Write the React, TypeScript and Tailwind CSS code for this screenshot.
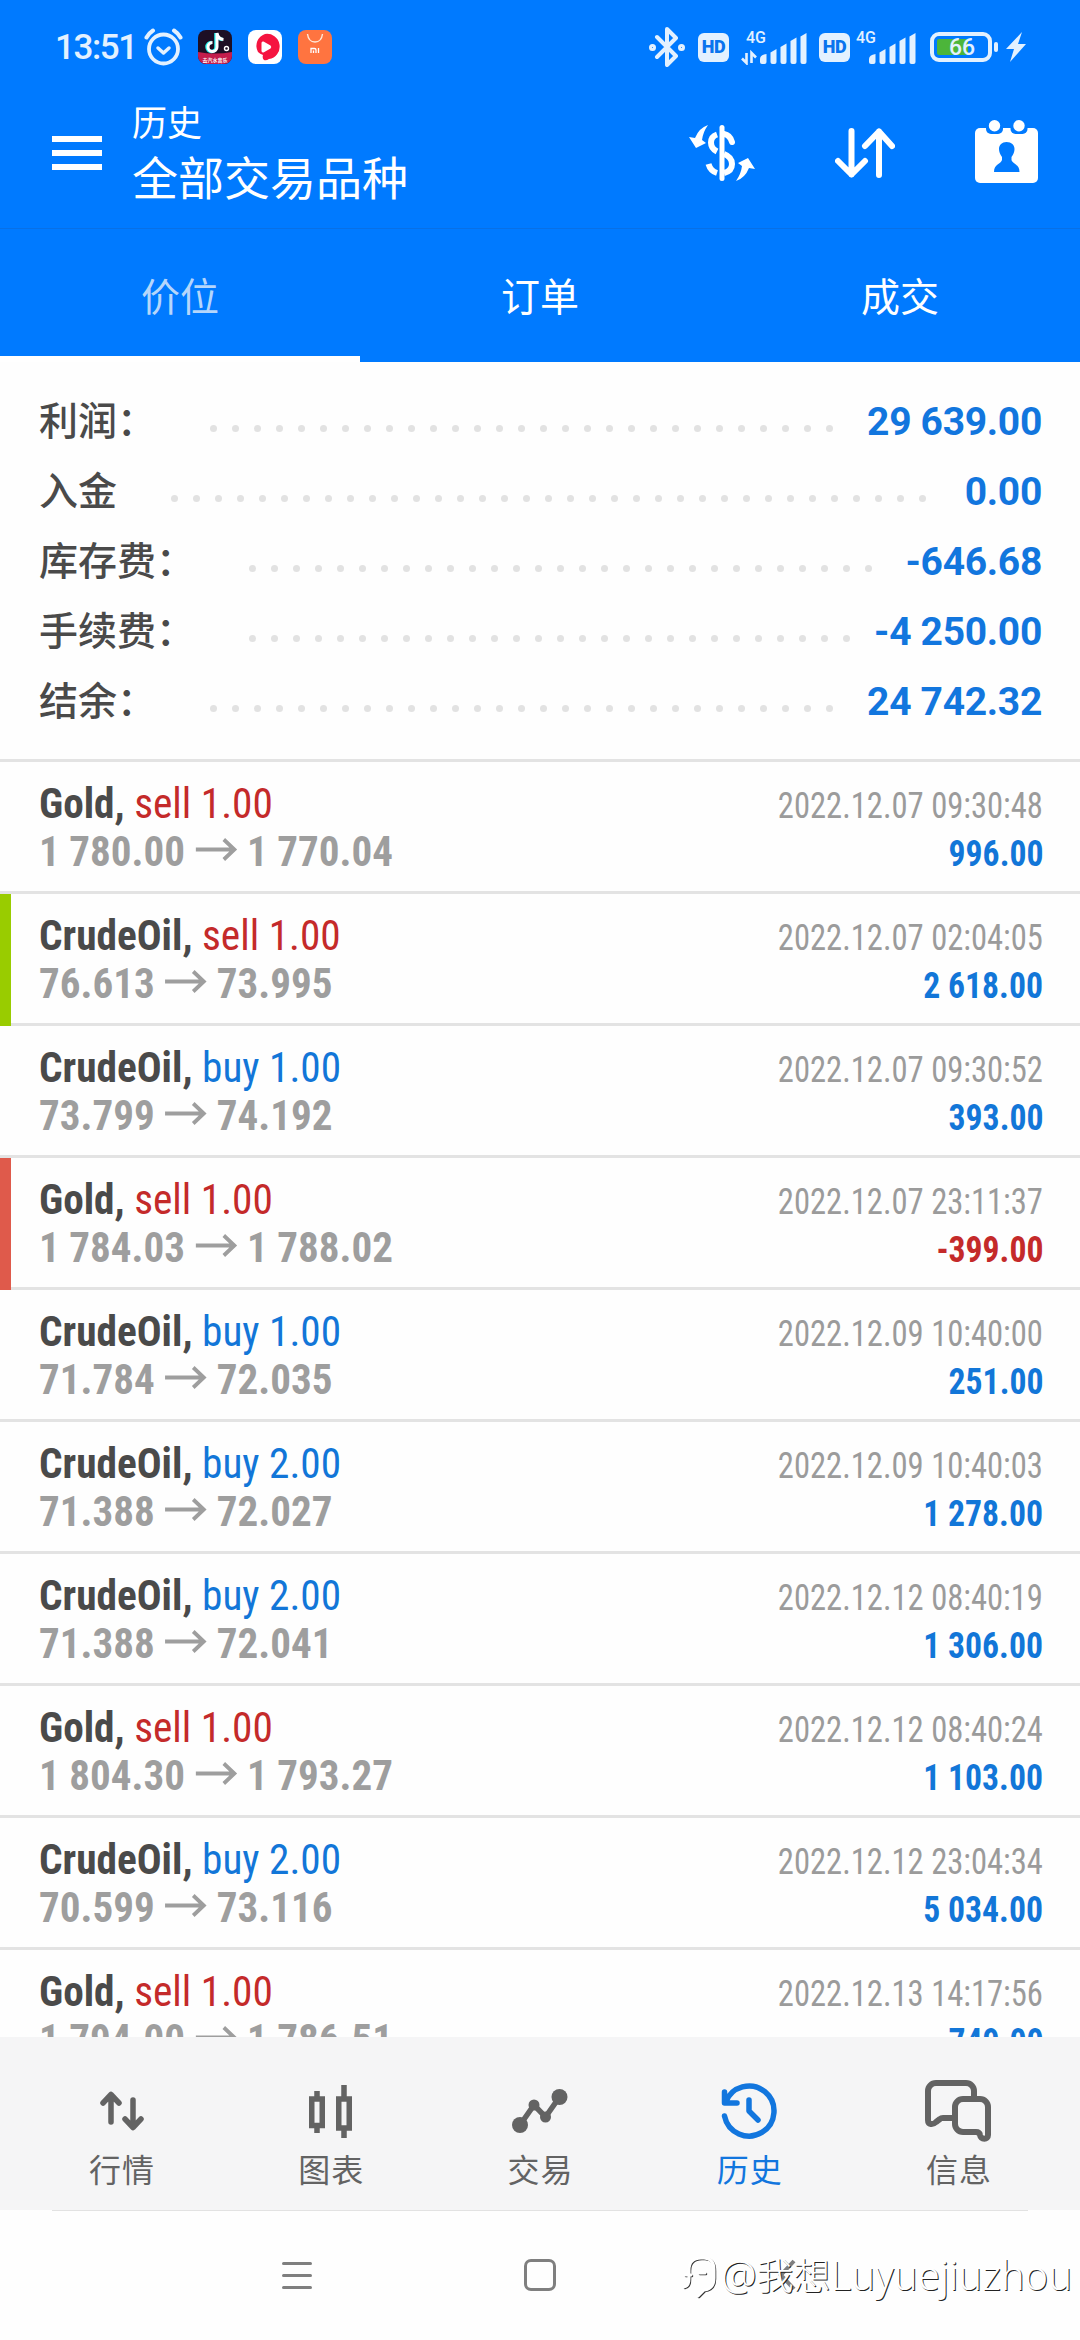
import React from "react";

type Deal = {
  symbol: string;
  side: "buy" | "sell";
  volume: string;
  open: string;
  close: string;
  time: string;
  profit: string;
  mark?: "tp" | "sl";
};

const summary = [
  { label: "利润：", value: "29 639.00" },
  { label: "入金", value: "0.00" },
  { label: "库存费：", value: "-646.68" },
  { label: "手续费：", value: "-4 250.00" },
  { label: "结余：", value: "24 742.32" },
];

const deals: Deal[] = [
  { symbol: "Gold", side: "sell", volume: "1.00", open: "1 780.00", close: "1 770.04", time: "2022.12.07 09:30:48", profit: "996.00" },
  { symbol: "CrudeOil", side: "sell", volume: "1.00", open: "76.613", close: "73.995", time: "2022.12.07 02:04:05", profit: "2 618.00", mark: "tp" },
  { symbol: "CrudeOil", side: "buy", volume: "1.00", open: "73.799", close: "74.192", time: "2022.12.07 09:30:52", profit: "393.00" },
  { symbol: "Gold", side: "sell", volume: "1.00", open: "1 784.03", close: "1 788.02", time: "2022.12.07 23:11:37", profit: "-399.00", mark: "sl" },
  { symbol: "CrudeOil", side: "buy", volume: "1.00", open: "71.784", close: "72.035", time: "2022.12.09 10:40:00", profit: "251.00" },
  { symbol: "CrudeOil", side: "buy", volume: "2.00", open: "71.388", close: "72.027", time: "2022.12.09 10:40:03", profit: "1 278.00" },
  { symbol: "CrudeOil", side: "buy", volume: "2.00", open: "71.388", close: "72.041", time: "2022.12.12 08:40:19", profit: "1 306.00" },
  { symbol: "Gold", side: "sell", volume: "1.00", open: "1 804.30", close: "1 793.27", time: "2022.12.12 08:40:24", profit: "1 103.00" },
  { symbol: "CrudeOil", side: "buy", volume: "2.00", open: "70.599", close: "73.116", time: "2022.12.12 23:04:34", profit: "5 034.00" },
  { symbol: "Gold", side: "sell", volume: "1.00", open: "1 794.00", close: "1 786.51", time: "2022.12.13 14:17:56", profit: "749.00" },
];

const HdBadge = () => (
  <div className="flex h-[29px] w-[31px] items-center justify-center rounded-[6px] bg-[#e3f1ff] text-[18px] font-black leading-none tracking-[-0.5px] text-[#0a74ee]">
    HD
  </div>
);

const SignalBars = ({ x }: { x: number }) => (
  <g fill="#e3f1ff" transform={`translate(${x} 0)`}>
    <path d="M0 33v-3q0-4 6.500-5v8q0 2-2 2H2q-2 0-2-2z" />
    <path d="M10.500 23.500l6-3.500v13q0 2-2 2h-2q-2 0-2-2z" />
    <path d="M20.500 18l6-3.500V33q0 2-2 2h-2q-2 0-2-2z" />
    <path d="M30.500 12l6-3.500V33q0 2-2 2h-2q-2 0-2-2z" />
    <path d="M40.500 7.500l6-3.500v29q0 2-2 2h-2q-2 0-2-2z" />
  </g>
);

const StatusBar = () => (
  <div className="flex h-[78px] items-center pl-[55px] pr-[54px] pt-4 text-[#e3f1ff]">
    <span className="w-[89px] whitespace-nowrap text-[35px] font-medium leading-none tracking-[-1.400px]">13:51</span>

    <svg width="39" height="38" viewBox="0 0 39 38" fill="none" stroke="currentColor" strokeLinecap="round">
      <circle cx="19.500" cy="21" r="14.500" strokeWidth="3.800" />
      <path d="M14 20l5.500 5 5.500-5" strokeWidth="3.500" strokeLinejoin="round" />
      <path d="M2.500 9.500q2-4 6.500-7M36.500 9.500q-2-4-6.500-7" strokeWidth="4" />
    </svg>

    <div className="ml-[15px] flex gap-4">
      <svg width="34" height="34" viewBox="0 0 34 34">
        <defs>
          <clipPath id="music">
            <rect width="34" height="34" rx="8" />
          </clipPath>
        </defs>
        <g clipPath="url(#music)">
          <rect width="34" height="34" fill="#1d0f24" />
          <path d="M0 22q17 3 34 0v12H0z" fill="#c41d4c" />
          <path d="M19 3v14a4.500 4.500 0 1 1-4.500-4.500M19 3q1 6 6.500 6.500" fill="none" stroke="#25f4ee" strokeWidth="3.500" transform="translate(-1 0)" />
          <path d="M19 3v14a4.500 4.500 0 1 1-4.500-4.500M19 3q1 6 6.500 6.500" fill="none" stroke="#fff" strokeWidth="3" />
          <circle cx="28.500" cy="18.500" r="2" fill="none" stroke="#fff" strokeWidth="1.400" />
          <text x="17" y="32" fill="#fff" fontSize="5" fontWeight="700" textAnchor="middle">去汽水音乐</text>
        </g>
      </svg>
      <svg width="34" height="34" viewBox="0 0 34 34">
        <rect width="34" height="34" rx="8" fill="#fff" />
        <path d="M17 4a12.500 12.500 0 1 1 4 25q-3 2-5 1-2-2-1-5-3-1-5-3a12.500 12.500 0 0 1 7-18z" fill="#f5143f" />
        <path d="M13.500 13q0-2 2-1.500l7 4q1.500 1.500 0 3l-7 4q-2 0-2-1.500z" fill="#fff" />
      </svg>
      <svg width="34" height="34" viewBox="0 0 34 34">
        <rect width="34" height="34" rx="8" fill="#ff7440" />
        <path d="M9.500 4q1 8 7.500 8t7.500-8" fill="none" stroke="#ffe9d8" strokeWidth="1.400" />
        <path d="M13 23v-4.500h3.500q1.500 0 1.500 1.500v3M15.500 20.500V23M20.500 18v5" fill="none" stroke="#fff" strokeWidth="1.300" />
      </svg>
    </div>

    <svg className="ml-auto" width="36" height="40" viewBox="0 0 36 40" fill="none" stroke="currentColor" strokeWidth="4" strokeLinejoin="round" strokeLinecap="round">
      <path d="M8 10l19 19-9 9V2l9 9L8 30" />
      <circle cx="3.500" cy="20.500" r="1.500" />
      <circle cx="32.500" cy="20.500" r="1.500" />
    </svg>
    <div className="ml-[13px]">
      <HdBadge />
    </div>
    <svg className="ml-[12px]" width="66" height="36" viewBox="0 0 66 36">
      <text x="5" y="14" fill="#e3f1ff" fontSize="16" fontWeight="500">4G</text>
      <path d="M5.500 24v10L1 29.500M10.500 34V24l4.500 4.500" fill="none" stroke="#e3f1ff" strokeWidth="2.600" />
      <SignalBars x={19} />
    </svg>
    <div className="ml-[12px]">
      <HdBadge />
    </div>
    <svg className="ml-[6px]" width="60" height="36" viewBox="0 0 60 36">
      <text x="0" y="14" fill="#e3f1ff" fontSize="16" fontWeight="500">4G</text>
      <SignalBars x={13} />
    </svg>
    <svg className="ml-[14px]" width="69" height="30" viewBox="0 0 69 30">
      <rect x="2" y="2" width="58" height="26" rx="7" fill="none" stroke="#e3f1ff" strokeWidth="4" />
      <rect x="7" y="7" width="31" height="16" rx="2" fill="#4cb53a" />
      <rect x="64" y="10" width="4" height="10" rx="2" fill="#e3f1ff" />
      <text x="32" y="23" fill="#e3f1ff" fontSize="23" fontWeight="500" textAnchor="middle">66</text>
    </svg>
    <svg className="ml-[7px]" width="20" height="30" viewBox="0 0 20 30" fill="currentColor">
      <path d="M16 0L0 17h8L4 30 20 12h-8z" />
    </svg>
  </div>
);

const Header = () => (
  <div className="flex h-[151px] items-center border-b border-[#0870e6] pl-[52px] pr-[42px] text-white">
    <div className="flex flex-col gap-2">
      <div className="h-[6px] w-[50px] bg-white" />
      <div className="h-[6px] w-[50px] bg-white" />
      <div className="h-[6px] w-[50px] bg-white" />
    </div>
    <div className="ml-[30px]">
      <p className="text-[35px] leading-[48px]">历史</p>
      <p className="mt-[3px] text-[46px] leading-[54px]">全部交易品种</p>
    </div>

    <div className="ml-auto flex items-center gap-20">
      <svg width="66" height="56" viewBox="0 0 66 56" fill="white">
        <rect x="30.500" y="0" width="5" height="56" rx="2.500" />
        <g fill="none" stroke="white" strokeWidth="6">
          <path d="M28 9.500q-6 2-6 8t6 9" />
          <path d="M35 9q6 1 8 8" strokeLinecap="round" />
          <path d="M35 29q8 3 8 10t-8 9" />
          <path d="M19.500 39q2 7 8.500 9" />
        </g>
        <path d="M0 12l6 1Q10 3 19 0q-5 7-6 15l4 3-10 5z" />
        <path d="M66 44l-6-1q-4 10-13 13 5-7 6-15l-4-3 10-5z" />
      </svg>
      <svg width="60" height="50" viewBox="0 0 60 50" fill="none" stroke="white" strokeWidth="6" strokeLinecap="round" strokeLinejoin="round">
        <path d="M16.500 3v43.500M3 33l13.500 13.500L30 33" />
        <path d="M44 47V3.500M30 18L44 3.500 57 18" />
      </svg>
      <svg className="-mt-[3px]" width="63" height="63" viewBox="0 0 63 63">
        <rect y="8" width="63" height="55" rx="5" fill="white" />
        <rect x="11" y="0" width="17" height="14" rx="5" fill="#007aff" />
        <rect x="35.500" y="0" width="17" height="14" rx="5" fill="#007aff" />
        <circle cx="19.500" cy="5.700" r="5.700" fill="white" />
        <circle cx="44" cy="5.700" r="5.700" fill="white" />
        <path d="M31.500 22c5 0 8 3 8 7 0 3-1 5-3 8v3c1 4 8 4 8 12h-25.500c0-8 7-8 8-12v-3c-2-3-3-5-3-8 0-4 3-7 7.500-7z" fill="#007aff" />
      </svg>
    </div>
  </div>
);

const Tabs = () => (
  <div className="grid h-[133px] grid-cols-3 text-[39px] text-white">
    <div className="flex items-center justify-center border-b-[6px] border-white pt-3 text-[#b5d6fb]">价位</div>
    <div className="flex items-center justify-center border-b-[6px] border-transparent pt-3">订单</div>
    <div className="flex items-center justify-center border-b-[6px] border-transparent pt-3">成交</div>
  </div>
);

const Summary = () => (
  <section className="border-b-[3px] border-[#e3e3e3] pb-[22px] pl-[39px] pr-[38px] pt-[25px]">
    {summary.map((item) => (
      <div key={item.label} className="flex h-[70px] items-center text-[39px] leading-[70px]">
        <span className="shrink-0 font-medium text-[#4a4a4a]">{item.label}</span>
        <div className="ml-[54px] mr-[20px] mt-[12px] flex h-[7px] flex-1 flex-wrap gap-x-[15px] overflow-hidden">
          {Array.from({ length: 40 }, (_, i) => (
            <i key={i} className="size-[7px] rounded-full bg-[#e2e2e2]" />
          ))}
        </div>
        <span className="shrink-0 font-bold tracking-[-0.300px] text-[#1276de]">{item.value}</span>
      </div>
    ))}
  </section>
);

const DealRow = ({ deal }: { deal: Deal }) => {
  const bar =
    deal.mark === "tp"
      ? "border-[#99cc00] bg-[#99cc00]"
      : deal.mark === "sl"
        ? "border-[#df5a4b] bg-[#df5a4b]"
        : "border-[#e3e3e3]";
  return (
    <div className="flex h-[132px] shrink-0 font-['Roboto_Condensed','Noto_Sans_CJK_SC',sans-serif]">
      <div className={`w-[11px] border-b-[3px] ${bar}`} />
      <div className="flex-1 border-b-[3px] border-[#e3e3e3] pl-7 pr-[37px] pt-[17px]">
        <div className="flex h-12 items-baseline justify-between leading-[48px]">
          <p className="origin-left scale-x-[0.96] text-[43px]">
            <span className="font-bold text-[#4a4a4a]">{deal.symbol}, </span>
            <span className={deal.side === "buy" ? "text-[#1276d8]" : "text-[#c42a2a]"}>
              {deal.side} {deal.volume}
            </span>
          </p>
          <p className="origin-right scale-x-[0.905] text-[36px] text-[#9b9b9b]">{deal.time}</p>
        </div>
        <div className="flex h-12 items-baseline justify-between font-bold leading-[48px]">
          <p className="flex origin-left scale-x-[0.955] items-baseline text-[43px] text-[#9e9e9e]">
            {deal.open}
            <svg className="ml-[11px] mr-[10px] -translate-y-[5px]" width="44" height="23" viewBox="0 0 44 23" fill="none" stroke="currentColor" strokeWidth="4">
              <path d="M0 11.500h41M29.500 1.500l11 10-11 10" />
            </svg>
            {deal.close}
          </p>
          <p className={`origin-right scale-x-[0.935] text-[36px] ${deal.profit.startsWith("-") ? "text-[#c42a2a]" : "text-[#1276d8]"}`}>
            {deal.profit}
          </p>
        </div>
      </div>
    </div>
  );
};

const navItems = [
  {
    label: "行情",
    icon: (
      <svg width="44" height="40" viewBox="0 0 44 40" fill="none" stroke="currentColor" strokeWidth="5.500" strokeLinecap="round" strokeLinejoin="round">
        <path d="M11 31V4M3 12l8-8.500 8 8.500M33 9v27M25 28l8 8.500 8-8.500" />
      </svg>
    ),
  },
  {
    label: "图表",
    icon: (
      <svg width="43" height="53" viewBox="0 0 43 53" fill="none" stroke="currentColor" strokeWidth="5.500">
        <path d="M2.750 14h10.500v26.500H2.750zM8 6v8M8 40v8M29.750 14h10.500v29H29.750zM35 0v14M35 43v10" />
      </svg>
    ),
  },
  {
    label: "交易",
    icon: (
      <svg width="56" height="44" viewBox="0 0 56 44" fill="currentColor">
        <path d="M8 36l14-20 11.500 12L47.500 8" fill="none" stroke="currentColor" strokeWidth="5.500" />
        <circle cx="8" cy="36" r="8" />
        <circle cx="22" cy="16" r="5.500" />
        <circle cx="33.500" cy="28" r="5.500" />
        <circle cx="47.500" cy="8" r="8" />
      </svg>
    ),
  },
  {
    label: "历史",
    active: true,
    icon: (
      <svg width="56" height="56" viewBox="0 0 56 56" fill="none" stroke="currentColor" strokeWidth="5.500" strokeLinecap="round" strokeLinejoin="round">
        <path d="M3.500 33A25 25 0 1 0 4.500 19.500M3.500 9v11h12.500M28 17v11l9 9" />
      </svg>
    ),
  },
  {
    label: "信息",
    icon: (
      <svg width="66" height="62" viewBox="0 0 66 62" fill="none" stroke="currentColor" strokeWidth="6">
        <path d="M49 18v-7a8 8 0 0 0-8-8H11a8 8 0 0 0-8 8v29c0 5 5 5 8 2l4-3q1-1 3-1h10" />
        <path d="M38 19h17a8 8 0 0 1 8 8v28c0 5-7 5-8 0q-.5-3-4-3H38a8 8 0 0 1-8-8V27a8 8 0 0 1 8-8z" />
      </svg>
    ),
  },
];

const BottomNav = () => (
  <nav className="grid h-[173px] grid-cols-5 bg-[#f5f5f6] px-[17px]">
    {navItems.map((item) => (
      <div
        key={item.label}
        className={`flex flex-col items-center pt-[42px] ${item.active ? "text-[#1276de]" : "text-[#636363]"}`}
      >
        <div className="flex h-16 items-center">{item.icon}</div>
        <span className="mt-[8px] pl-px text-[32px] leading-10 tracking-[1px]">{item.label}</span>
      </div>
    ))}
  </nav>
);

const SystemNav = () => (
  <div className="relative h-[130px] px-[52px]">
    <div className="h-px bg-[#e2e2e2]" />
    <div className="flex h-[128px] items-center pl-[230px] text-[#7f7f7f]">
      <div className="flex w-[30px] flex-col gap-[9px]">
        <div className="h-[3px] rounded bg-[#7f7f7f]" />
        <div className="h-[3px] rounded bg-[#7f7f7f]" />
        <div className="h-[3px] rounded bg-[#7f7f7f]" />
      </div>
      <div className="ml-[212px] h-8 w-8 rounded-[7px] border-[3px] border-[#7f7f7f]" />
      <svg className="ml-[222px]" width="18" height="32" viewBox="0 0 18 32" fill="none" stroke="currentColor" strokeWidth="4">
        <path d="M16 2L3 16l13 14" />
      </svg>
    </div>

    {/* watermark */}
    <div className="absolute right-[8px] top-[39px] flex items-center text-white">
      <svg className="mr-[3px]" width="36" height="48" viewBox="0 0 36 48" fill="none" strokeLinecap="round">
        <path d="M3 36q5-1 5-8v-9q0-12 12-12h3q10 0 10 12v8q0 11-10 12l-6 6M4 24h6M18 22h6" stroke="#333" strokeWidth="2.500" />
        <path d="M2 35q5-1 5-8v-9q0-12 12-12h3q10 0 10 12v8q0 11-10 12l-6 6M3 23h6M17 21h6" stroke="#fff" strokeWidth="3" />
      </svg>
      <p className="whitespace-nowrap font-['Noto_Sans','Noto_Sans_CJK_SC',sans-serif] text-[40px] font-light leading-[52px] [text-shadow:1px_1px_0.5px_#222]">
        @<span className="text-[37px]">我想</span>Luyuejiuzhou
      </p>
    </div>
  </div>
);

export default function App() {
  return (
    <div className="flex h-[2340px] w-[1080px] flex-col overflow-hidden bg-[#fefefe] font-['Roboto','Noto_Sans_CJK_SC',sans-serif]">
      <header className="bg-[#007aff]">
        <StatusBar />
        <Header />
        <Tabs />
      </header>
      <main className="flex flex-1 flex-col overflow-hidden">
        <Summary />
        {deals.map((deal) => (
          <DealRow key={deal.time} deal={deal} />
        ))}
      </main>
      <BottomNav />
      <SystemNav />
    </div>
  );
}
